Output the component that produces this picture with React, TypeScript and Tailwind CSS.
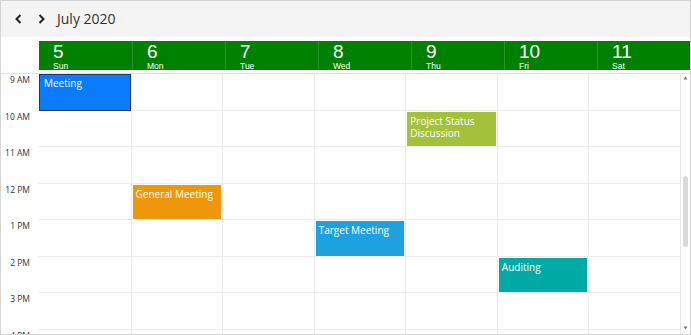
import React from "react";

interface Appt {
  day: number;
  hour: number;
  title: string;
  color: string;
  selected?: boolean;
}

const days = [
  { num: 5, name: "Sun" },
  { num: 6, name: "Mon" },
  { num: 7, name: "Tue" },
  { num: 8, name: "Wed" },
  { num: 9, name: "Thu" },
  { num: 10, name: "Fri" },
  { num: 11, name: "Sat" },
];

const hours = ["9 AM", "10 AM", "11 AM", "12 PM", "1 PM", "2 PM", "3 PM", "4 PM"];

const appts: Appt[] = [
  { day: 0, hour: 0, title: "Meeting", color: "bg-[#0b7bfd]", selected: true },
  { day: 4, hour: 1, title: "Project Status Discussion", color: "bg-[#a3c13a]" },
  { day: 1, hour: 3, title: "General Meeting", color: "bg-[#f0960b]" },
  { day: 3, hour: 4, title: "Target Meeting", color: "bg-[#1ea1e1]" },
  { day: 5, hour: 5, title: "Auditing", color: "bg-[#02aaa6]" },
];

function Chevron({ dir }: { dir: "left" | "right" }) {
  return (
    <svg width="10" height="12" viewBox="0 0 10 12" className="text-[#222]">
      <path
        d={dir === "left" ? "M6.5 2 L2.5 6 L6.5 10" : "M3.5 2 L7.5 6 L3.5 10"}
        fill="none"
        stroke="currentColor"
        strokeWidth="2"
      />
    </svg>
  );
}

export default function App() {
  return (
    <div className="w-[691px] h-[335px] border border-[#d4d4d4] overflow-hidden flex flex-col bg-white font-['Open_Sans','Noto_Sans',sans-serif]">
      {/* toolbar */}
      <div className="h-[36px] bg-[#f4f4f4] flex items-center shrink-0">
        <div className="flex items-center gap-[12px] pl-[13px]">
          <Chevron dir="left" />
          <Chevron dir="right" />
        </div>
        <span className="ml-[11px] text-[14px] text-[#333] leading-none">July 2020</span>
      </div>

      {/* day header */}
      <div className="flex mt-[4px] h-[29px] shrink-0">
        <div className="w-[38px] shrink-0" />
        <div className="flex-1 grid grid-cols-7 bg-[#008000] font-['Liberation_Sans',Arial,sans-serif] text-white">
          {days.map((d, i) => (
            <div key={d.num} className={`flex flex-col pl-[14px] ${i > 0 ? "border-l border-[#2a922a]" : ""}`}>
              <span className="text-[19px] leading-[21px]">{d.num}</span>
              <span className="text-[8.5px] leading-[8px]">{d.name}</span>
            </div>
          ))}
        </div>
      </div>

      {/* grid */}
      <div className="mt-[3px] flex flex-1 border-t border-[#e3e3e3] min-h-0">
        <div className="w-[38px] shrink-0 flex flex-col">
          {hours.map((h) => (
            <div key={h} className="h-[36.5px] shrink-0 text-right pr-[9px] pt-[1px] text-[8.5px] leading-[10px] text-[#333]">
              {h}
            </div>
          ))}
        </div>
        <div className="flex-1 flex flex-col">
          {hours.map((h, r) => (
            <div key={h} className="h-[36.5px] shrink-0 grid grid-cols-7 border-b border-[#ebebeb]">
              {days.map((d, c) => {
                const a = appts.find((x) => x.day === c && x.hour === r);
                return (
                  <div key={d.num} className={`relative ${c > 0 ? "border-l border-[#ebebeb]" : ""}`}>
                    {a && (
                      <div
                        className={`absolute ${a.selected ? "top-0 -bottom-[1px] inset-x-0 border border-[#1c3a6c] px-[4px] pt-[2px]" : "top-[1px] bottom-[0px] left-[1px] right-[1px] px-[3px] pt-[3px]"} ${a.color} text-[10px] leading-[12px] text-white`}
                      >
                        {a.title}
                      </div>
                    )}
                  </div>
                );
              })}
            </div>
          ))}
        </div>
        {/* scrollbar */}
        <div className="w-[10px] shrink-0 border-l border-[#e6e6e6] flex flex-col items-center py-[1px]">
          <svg width="5" height="4" viewBox="0 0 5 4" className="mt-[1px]">
            <path d="M2.5 0.5 L4.5 3.5 L0.5 3.5 Z" fill="#777" />
          </svg>
          <div className="mt-[96px] w-[5px] h-[71px] rounded-full bg-[#dadada]" />
          <div className="flex-1" />
          <svg width="5" height="4" viewBox="0 0 5 4" className="mb-[3px]">
            <path d="M0.5 0.5 L4.5 0.5 L2.5 3.5 Z" fill="#777" />
          </svg>
        </div>
      </div>
    </div>
  );
}
